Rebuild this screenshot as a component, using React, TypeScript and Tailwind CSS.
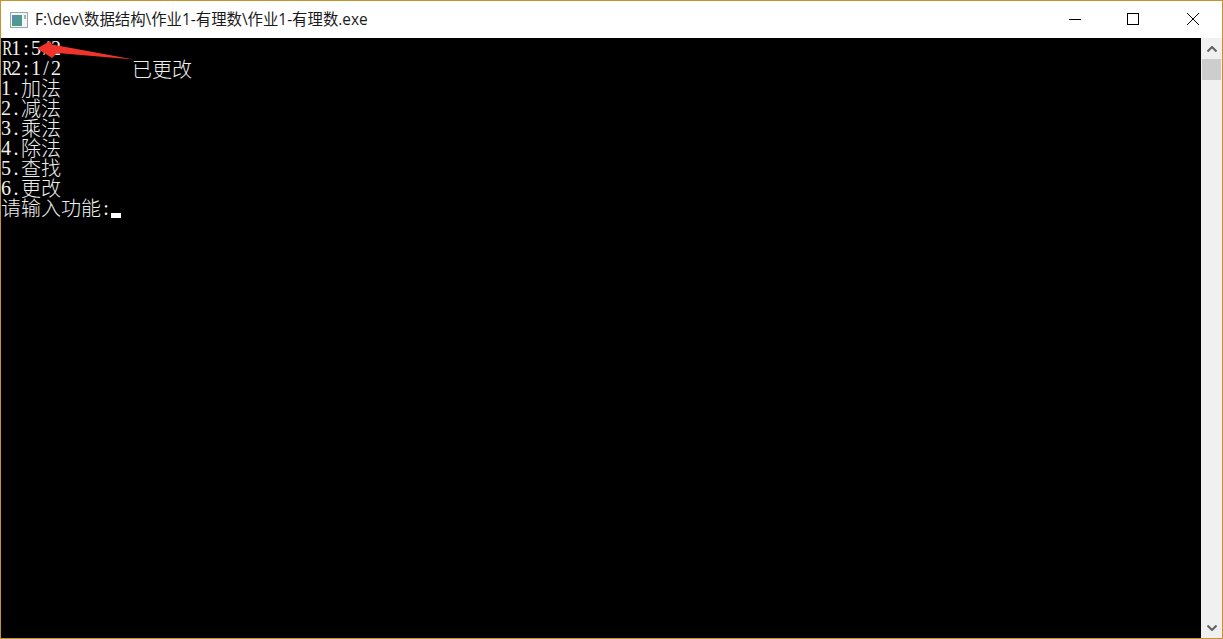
const lines = ['R1:5/2', 'R2:1/2', '1.加法', '2.减法', '3.乘法', '4.除法', '5.查找', '6.更改'];

// console cells: latin chars take 10px, cjk chars take 20px
function ConsoleText({ text }: { text: string }) {
  return (
    <>
      {text.split('').map((ch, i) =>
        ch.charCodeAt(0) > 255 ? (
          <span key={i} className="inline-block w-[20px] text-center translate-y-px">{ch}</span>
        ) : ch === 'R' ? (
          <span key={i} className="inline-block w-[10px] text-center scale-x-75">{ch}</span>
        ) : (
          <span key={i} className="inline-block w-[10px] text-center">{ch}</span>
        )
      )}
    </>
  );
}

export default function App() {
  return (
    <div className="relative flex flex-col w-[1223px] h-[639px] border border-[#c8922f] bg-white overflow-hidden">
      {/* Title bar */}
      <div className="flex items-center h-[37px] shrink-0 bg-white">
        <svg width="18" height="16" viewBox="0 0 18 16" className="ml-[9px] mr-[7px]">
          <rect x="0.5" y="0.5" width="17" height="15" fill="#f4f6f6" stroke="#9aa6ab" />
          <rect x="2" y="3" width="10" height="11" fill="#4f9a8c" />
          <rect x="2" y="3" width="5" height="5" fill="#5b8fb0" />
          <rect x="14" y="3" width="2" height="4" fill="#9fb3b8" />
        </svg>
        <span className="text-[15.4px] text-[#1a1a1a] font-['Open_Sans','Noto_Sans_CJK_SC',sans-serif]">
          F:\dev\数据结构\作业1-有理数\作业1-有理数.exe
        </span>
        <div className="ml-auto flex items-center h-full pb-[1px]">
          <div className="w-[56px] flex justify-center">
            <div className="w-[12px] h-px bg-black" />
          </div>
          <div className="w-[60px] flex justify-center">
            <div className="w-[12px] h-[12px] border border-black" />
          </div>
          <div className="w-[59px] flex justify-center">
            <svg width="12" height="12" viewBox="0 0 12 12" stroke="black" strokeWidth="1">
              <path d="M0 0L12 12M12 0L0 12" />
            </svg>
          </div>
        </div>
      </div>

      {/* Console area */}
      <div className="flex flex-1 min-h-0">
        <div className="flex-1 bg-black text-[#f0f0f0] text-[20px] leading-[20px] font-['Liberation_Serif','Noto_Sans_CJK_SC',serif] font-light">
          {lines.map((line) => (
            <div key={line} className="h-[20px]">
              <ConsoleText text={line} />
            </div>
          ))}
          <div className="h-[20px] flex">
            <span>
              <ConsoleText text="请输入功能:" />
            </span>
            <div className="w-[10px] h-[5px] bg-white self-end" />
          </div>
        </div>

        {/* Scrollbar */}
        <div className="flex flex-col items-center w-[21px] bg-[#f0f0f0]">
          <div className="h-[21px] flex items-center justify-center">
            <svg width="10" height="6" viewBox="0 0 10 6" fill="none" stroke="#606060" strokeWidth="2">
              <path d="M0.5 5.5L5 1L9.5 5.5" />
            </svg>
          </div>
          <div className="w-[19px] h-[21px] bg-[#cdcdcd]" />
          <div className="mt-auto h-[21px] flex items-center justify-center">
            <svg width="10" height="6" viewBox="0 0 10 6" fill="none" stroke="#606060" strokeWidth="2">
              <path d="M0.5 0.5L5 5L9.5 0.5" />
            </svg>
          </div>
        </div>
      </div>

      {/* Annotation over the console */}
      <svg width="100" height="24" viewBox="0 0 100 24" className="absolute left-[35px] top-[38px]">
        <path d="M1 9.5L14 2L16 5.5L98 20.5L21 14L16 19Z" fill="#f0342c" />
      </svg>
      <span className="absolute left-[131px] top-[58px] text-[20px] leading-[20px] text-[#f0f0f0] font-['Noto_Sans_CJK_SC',sans-serif] font-light">
        已更改
      </span>
    </div>
  );
}
